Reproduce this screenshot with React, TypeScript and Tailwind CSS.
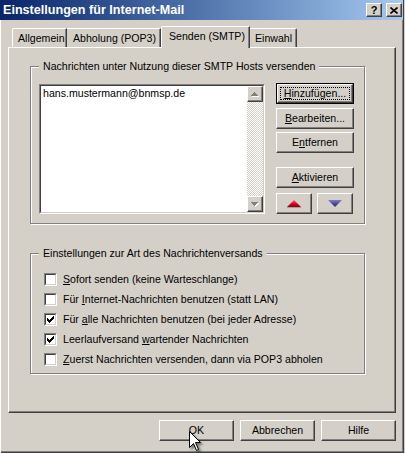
import type { ReactNode } from "react";

const raised =
  "bg-[#d4d0c8] border border-t-white border-l-white border-r-[#404040] border-b-[#404040] shadow-[inset_-1px_-1px_0_#808080]";

function Btn({
  children,
  className = "",
  isDefault = false,
}: {
  children: ReactNode;
  className?: string;
  isDefault?: boolean;
}) {
  if (isDefault) {
    return (
      <div className={`border border-black flex ${className}`}>
        <div className={`${raised} flex-1 flex p-[2px]`}>
          <span className="flex-1 flex items-center justify-center border border-dotted border-black leading-[13px]">
            {children}
          </span>
        </div>
      </div>
    );
  }
  return (
    <div className={`${raised} flex items-center justify-center ${className}`}>
      {children}
    </div>
  );
}

function Check({ checked, children }: { checked?: boolean; children: ReactNode }) {
  return (
    <div className="flex items-start h-[20px]">
      {/* sunken checkbox */}
      <div className="w-[13px] h-[13px] border border-t-[#808080] border-l-[#808080] border-r-white border-b-white">
        <div className="w-full h-full border border-t-[#404040] border-l-[#404040] border-r-[#d4d0c8] border-b-[#d4d0c8] bg-white flex items-center justify-center">
          {checked && (
            <svg width="7" height="7" viewBox="0 0 7 7" shapeRendering="crispEdges">
              <path
                d="M6 0h1v3h-1v1h-1v1h-1v1h-1v1h-1v-1h-1v-1h-1v-3h1v1h1v1h1v-1h1v-1h1z"
                fill="#000"
              />
            </svg>
          )}
        </div>
      </div>
      <span className="ml-[6px] leading-[13px]">{children}</span>
    </div>
  );
}

function GroupBox({
  label,
  className = "",
  children,
}: {
  label: string;
  className?: string;
  children: ReactNode;
}) {
  return (
    <div
      className={`relative border border-[#808080] shadow-[inset_1px_1px_0_#fff,1px_1px_0_#fff] ${className}`}
    >
      <span className="absolute -top-[7px] left-[8px] px-[4px] bg-[#d4d0c8] leading-[13px]">
        {label}
      </span>
      {children}
    </div>
  );
}

function ScrollArrow({ up }: { up?: boolean }) {
  return (
    <div className={`${raised} w-[16px] h-[16px] flex items-center justify-center`}>
      <svg width="8" height="5" viewBox="0 0 8 5" shapeRendering="crispEdges">
        {up ? (
          <>
            <path d="M4 1 L8 5 L1 5 Z" fill="#fff" />
            <path d="M3.5 0 L7 4 L0 4 Z" fill="#808080" />
          </>
        ) : (
          <>
            <path d="M1 1 L8 1 L4.5 5 Z" fill="#fff" />
            <path d="M0 0 L7 0 L3.5 4 Z" fill="#808080" />
          </>
        )}
      </svg>
    </div>
  );
}

export default function App() {
  return (
    <div className="w-[405px] h-[453px] bg-[#d4d0c8] font-['Liberation_Sans',Arial,sans-serif] text-[10.6px] text-black relative overflow-hidden">
      <div className="w-[404px] h-[453px] flex flex-col shadow-[inset_1px_0_0_#fff,inset_-1px_-1px_0_#404040,inset_-2px_-2px_0_#808080]">
        {/* Title bar */}
        <div className="h-[20px] w-[403px] bg-linear-to-r from-[#0a246a] to-[#a6caf0] flex items-center justify-between pl-[3px] pr-[1px]">
          <span className="text-white font-bold text-[12.6px] leading-none">
            Einstellungen für Internet-Mail
          </span>
          <div className="flex gap-[4px]">
            <div className={`${raised} w-[16px] h-[14px] flex items-center justify-center font-bold text-[11px] leading-none`}>
              ?
            </div>
            <div className={`${raised} w-[16px] h-[14px] flex items-center justify-center`}>
              <svg width="8" height="7" viewBox="0 0 8 7">
                <path d="M0.5 0.5 L7.5 6.5 M7.5 0.5 L0.5 6.5" stroke="#000" strokeWidth="1.6" />
              </svg>
            </div>
          </div>
        </div>

        {/* Tabs */}
        <div className="mt-[6px] pl-[12px] flex items-end h-[21px]">
          <div className="w-[55px] h-[19px] border-t border-l border-white border-r border-r-[#404040] shadow-[inset_-1px_0_0_#808080] rounded-tl-[2px] pl-[5px] pt-[3px] leading-[13px]">
            Allgemein
          </div>
          <div className="w-[94px] h-[19px] border-t border-white border-r border-r-[#404040] shadow-[inset_-1px_0_0_#808080] pl-[6px] pt-[3px] leading-[13px]">
            Abholung (POP3)
          </div>
          <div className="relative z-10 w-[89px] h-[22px] -mb-[1px] bg-[#d4d0c8] border-t border-l border-white border-r border-r-[#404040] shadow-[inset_-1px_0_0_#808080] rounded-tl-[2px] pl-[7px] pt-[3px] leading-[13px]">
            Senden (SMTP)
          </div>
          <div className="w-[47px] h-[19px] border-t border-white border-r border-r-[#404040] shadow-[inset_-1px_0_0_#808080] rounded-tr-[2px] pl-[5px] pt-[3px] leading-[13px]">
            Einwahl
          </div>
        </div>

        {/* Tab panel */}
        <div className="ml-[8px] w-[388px] h-[366px] border border-t-white border-l-white border-r-[#404040] border-b-[#404040] shadow-[inset_-1px_-1px_0_#808080] flex flex-col">
          <GroupBox
            label="Nachrichten unter Nutzung dieser SMTP Hosts versenden"
            className="ml-[21px] mt-[18px] w-[335px] h-[158px] shrink-0"
          >
            <div className="flex mt-[16px] ml-[8px]">
              {/* List box */}
              <div className="w-[226px] h-[130px] mt-[1px] border border-t-[#808080] border-l-[#808080] border-r-white border-b-white flex">
                <div className="flex-1 flex border border-t-[#404040] border-l-[#404040] border-r-[#d4d0c8] border-b-[#d4d0c8] bg-white">
                  <div className="flex-1 pl-[2px] pt-[1px] leading-[13px]">
                    hans.mustermann@bnmsp.de
                  </div>
                  <div className="w-[16px] flex flex-col">
                    <ScrollArrow up />
                    <div className="flex-1 bg-[repeating-conic-gradient(#fff_0%_25%,#d4d0c8_0%_50%)] bg-size-[2px_2px]" />
                    <ScrollArrow />
                  </div>
                </div>
              </div>

              {/* Buttons */}
              <div className="ml-[11px] flex flex-col">
                <Btn isDefault className="w-[78px] h-[21px]">
                  <span className="underline">H</span>inzufügen...
                </Btn>
                <Btn className="w-[78px] h-[21px] mt-[4px]">
                  <span className="underline">B</span>earbeiten...
                </Btn>
                <Btn className="w-[78px] h-[21px] mt-[3px]">
                  E<span className="underline">n</span>tfernen
                </Btn>
                <Btn className="w-[78px] h-[21px] mt-[14px]">
                  <span className="underline">A</span>ktivieren
                </Btn>
                <div className="flex gap-[5px] mt-[5px]">
                  <Btn className="w-[36px] h-[21px]">
                    <svg width="14" height="8" viewBox="0 0 14 8">
                      <defs>
                        <linearGradient id="red" x1="0" y1="0" x2="0" y2="1">
                          <stop offset="0" stopColor="#ff6060" />
                          <stop offset="0.6" stopColor="#d00018" />
                          <stop offset="1" stopColor="#900010" />
                        </linearGradient>
                      </defs>
                      <path d="M7 0 L14 7 L0 7 Z" fill="url(#red)" />
                      <rect x="0" y="7" width="14" height="1" fill="#a0a0a0" />
                    </svg>
                  </Btn>
                  <Btn className="w-[36px] h-[21px]">
                    <svg width="14" height="8" viewBox="0 0 14 8">
                      <defs>
                        <linearGradient id="blue" x1="0" y1="0" x2="0" y2="1">
                          <stop offset="0" stopColor="#8080c8" />
                          <stop offset="0.5" stopColor="#4a4aa0" />
                          <stop offset="1" stopColor="#303078" />
                        </linearGradient>
                      </defs>
                      <path d="M0 0 L14 0 L7 7 Z" fill="url(#blue)" />
                    </svg>
                  </Btn>
                </div>
              </div>
            </div>
          </GroupBox>

          <GroupBox
            label="Einstellungen zur Art des Nachrichtenversands"
            className="ml-[21px] mt-[29px] w-[335px] h-[121px] shrink-0"
          >
            <div className="flex flex-col pl-[13px] pt-[19px]">
              <Check>
                <span className="underline">S</span>ofort senden (keine Warteschlange)
              </Check>
              <Check>
                Für <span className="underline">I</span>nternet-Nachrichten benutzen (statt LAN)
              </Check>
              <Check checked>
                Für <span className="underline">a</span>lle Nachrichten benutzen (bei jeder Adresse)
              </Check>
              <Check checked>
                Leerlaufversand <span className="underline">w</span>artender Nachrichten
              </Check>
              <Check>
                <span className="underline">Z</span>uerst Nachrichten versenden, dann via POP3 abholen
              </Check>
            </div>
          </GroupBox>
        </div>

        {/* Dialog buttons */}
        <div className="mt-[7px] flex justify-end gap-[6px] pr-[8px]">
          <Btn className="w-[75px] h-[21px]">OK</Btn>
          <Btn className="w-[75px] h-[21px]">Abbrechen</Btn>
          <Btn className="w-[75px] h-[21px]">Hilfe</Btn>
        </div>
      </div>

      {/* mouse pointer over OK */}
      <svg
        className="absolute left-[189px] top-[431px] drop-shadow-[2px_2px_1px_rgba(0,0,0,0.45)]"
        width="13"
        height="21"
        viewBox="0 0 13 21"
      >
        <path
          d="M0.5 0.5 L0.5 16.5 L4.5 12.5 L7.5 19.5 L9.5 18.5 L6.5 11.5 L11.5 11.5 Z"
          fill="#fff"
          stroke="#000"
          strokeWidth="1"
        />
      </svg>
    </div>
  );
}
